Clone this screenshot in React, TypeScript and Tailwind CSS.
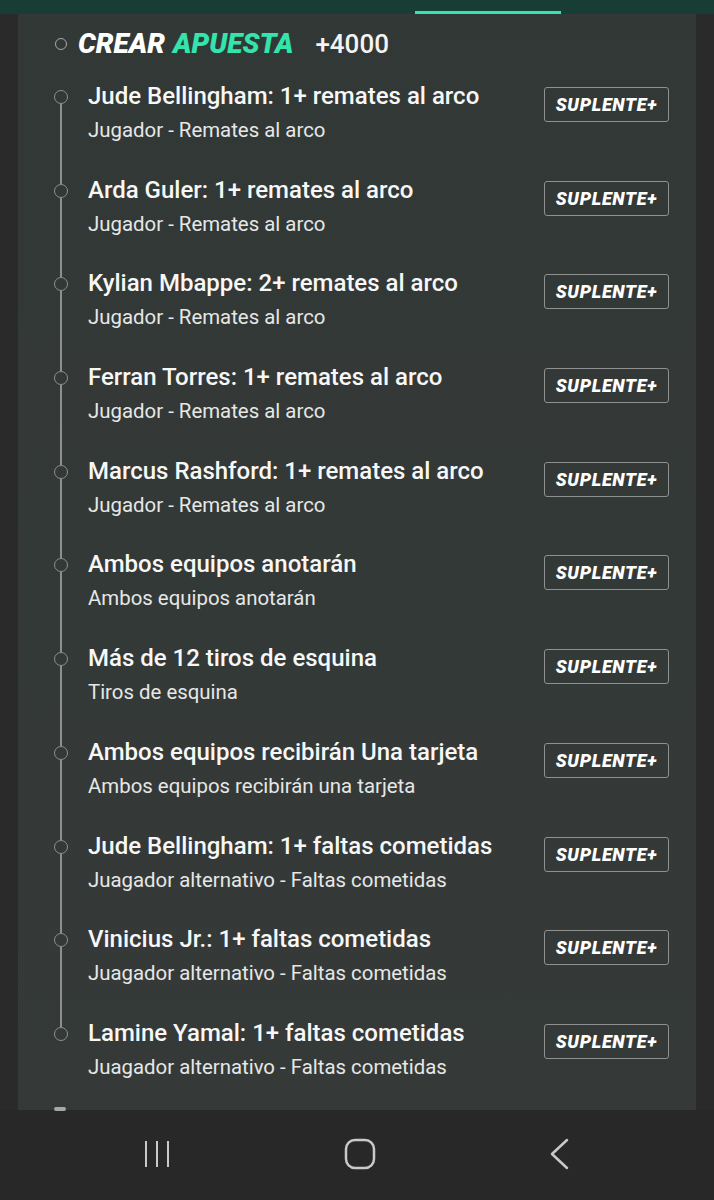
import React from "react";

const items = [
  ["Jude Bellingham: 1+ remates al arco", "Jugador - Remates al arco"],
  ["Arda Guler: 1+ remates al arco", "Jugador - Remates al arco"],
  ["Kylian Mbappe: 2+ remates al arco", "Jugador - Remates al arco"],
  ["Ferran Torres: 1+ remates al arco", "Jugador - Remates al arco"],
  ["Marcus Rashford: 1+ remates al arco", "Jugador - Remates al arco"],
  ["Ambos equipos anotarán", "Ambos equipos anotarán"],
  ["Más de 12 tiros de esquina", "Tiros de esquina"],
  ["Ambos equipos recibirán Una tarjeta", "Ambos equipos recibirán una tarjeta"],
  ["Jude Bellingham: 1+ faltas cometidas", "Juagador alternativo - Faltas cometidas"],
  ["Vinicius Jr.: 1+ faltas cometidas", "Juagador alternativo - Faltas cometidas"],
  ["Lamine Yamal: 1+ faltas cometidas", "Juagador alternativo - Faltas cometidas"],
];

const font = { fontFamily: "Roboto, 'Noto Sans', sans-serif" };

export default function App() {
  return (
    <div className="w-[714px] h-[1200px] bg-[#2a2a2a] flex flex-col overflow-hidden" style={font}>
      <div className="h-[14px] bg-[#183d34] flex shrink-0">
        <div className="ml-[415px] w-[146px] h-[3px] mt-[11px] bg-[#33e4ad]" />
      </div>
      <div className="mx-[18px] h-[1096px] shrink-0 bg-gradient-to-b from-[#323836] to-[#353a38] overflow-hidden flex flex-col pl-[30px] pr-[27px]">
        <div className="h-[68px] flex items-center shrink-0 pl-[7px] pb-[9px]">
          <div className="w-[12px] h-[12px] rounded-full border-[1.5px] border-[#a8aaa9]" />
          <div className="ml-[11px] flex items-baseline">
            <span className="text-[28px] font-black italic tracking-[0px] text-white">CREAR</span>
            <span className="ml-[8px] text-[28px] font-black italic tracking-[0px] text-[#33e4ad]">APUESTA</span>
            <span className="ml-[22px] text-[26px] font-medium text-[#f4f4f4]">+4000</span>
          </div>
        </div>
        <div className="flex flex-col">
          {items.map(([t, s], i) => (
            <div key={i} className="h-[93.7px] shrink-0 flex">
              <div className="w-[26px] flex flex-col items-center shrink-0">
                <div className={`w-[2px] h-[8px] ${i === 0 ? "" : "bg-[#8d908f]"}`} />
                <div className="w-[14px] h-[14px] rounded-full border-[1.5px] border-[#8d908f] shrink-0" />
                <div className={`w-[2px] flex-1 ${i === items.length - 1 ? "" : "bg-[#8d908f]"}`} />
              </div>
              <div className="ml-[14px] flex-1 flex flex-col">
                <div className="text-[24px] leading-[28px] font-medium text-[#f7f7f7]">{t}</div>
                <div className="text-[20.4px] leading-[26px] text-[#e6e7e6] mt-[7px]">{s}</div>
              </div>
              <div className="mt-[5px] w-[125px] h-[35px] border border-[#8e918f] rounded-[3px] flex items-center justify-center shrink-0">
                <span className="text-[18px] font-black italic text-white tracking-[0.7px]">SUPLENTE+</span>
              </div>
            </div>
          ))}
        </div>
      </div>
      <div className="flex-1 bg-[#282828] flex items-center justify-center relative">
        <div className="absolute left-[54px] top-[-3px] w-[12px] h-[4px] rounded-full bg-[#d8d8d8] opacity-70" />
        <div className="flex items-center w-[430px] justify-between mt-[-2px]">
          <svg width="30" height="30" viewBox="0 0 30 30">
            <path d="M4 2v26M15 2v26M26 2v26" stroke="#c9c9c9" strokeWidth="2" fill="none" />
          </svg>
          <svg width="32" height="32" viewBox="0 0 32 32">
            <rect x="2" y="2" width="28" height="28" rx="9" stroke="#c9c9c9" strokeWidth="2.5" fill="none" />
          </svg>
          <svg width="24" height="32" viewBox="0 0 24 32">
            <path d="M19 2L4 16l15 14" stroke="#c9c9c9" strokeWidth="2.5" fill="none" strokeLinecap="round" strokeLinejoin="round" />
          </svg>
        </div>
      </div>
    </div>
  );
}
